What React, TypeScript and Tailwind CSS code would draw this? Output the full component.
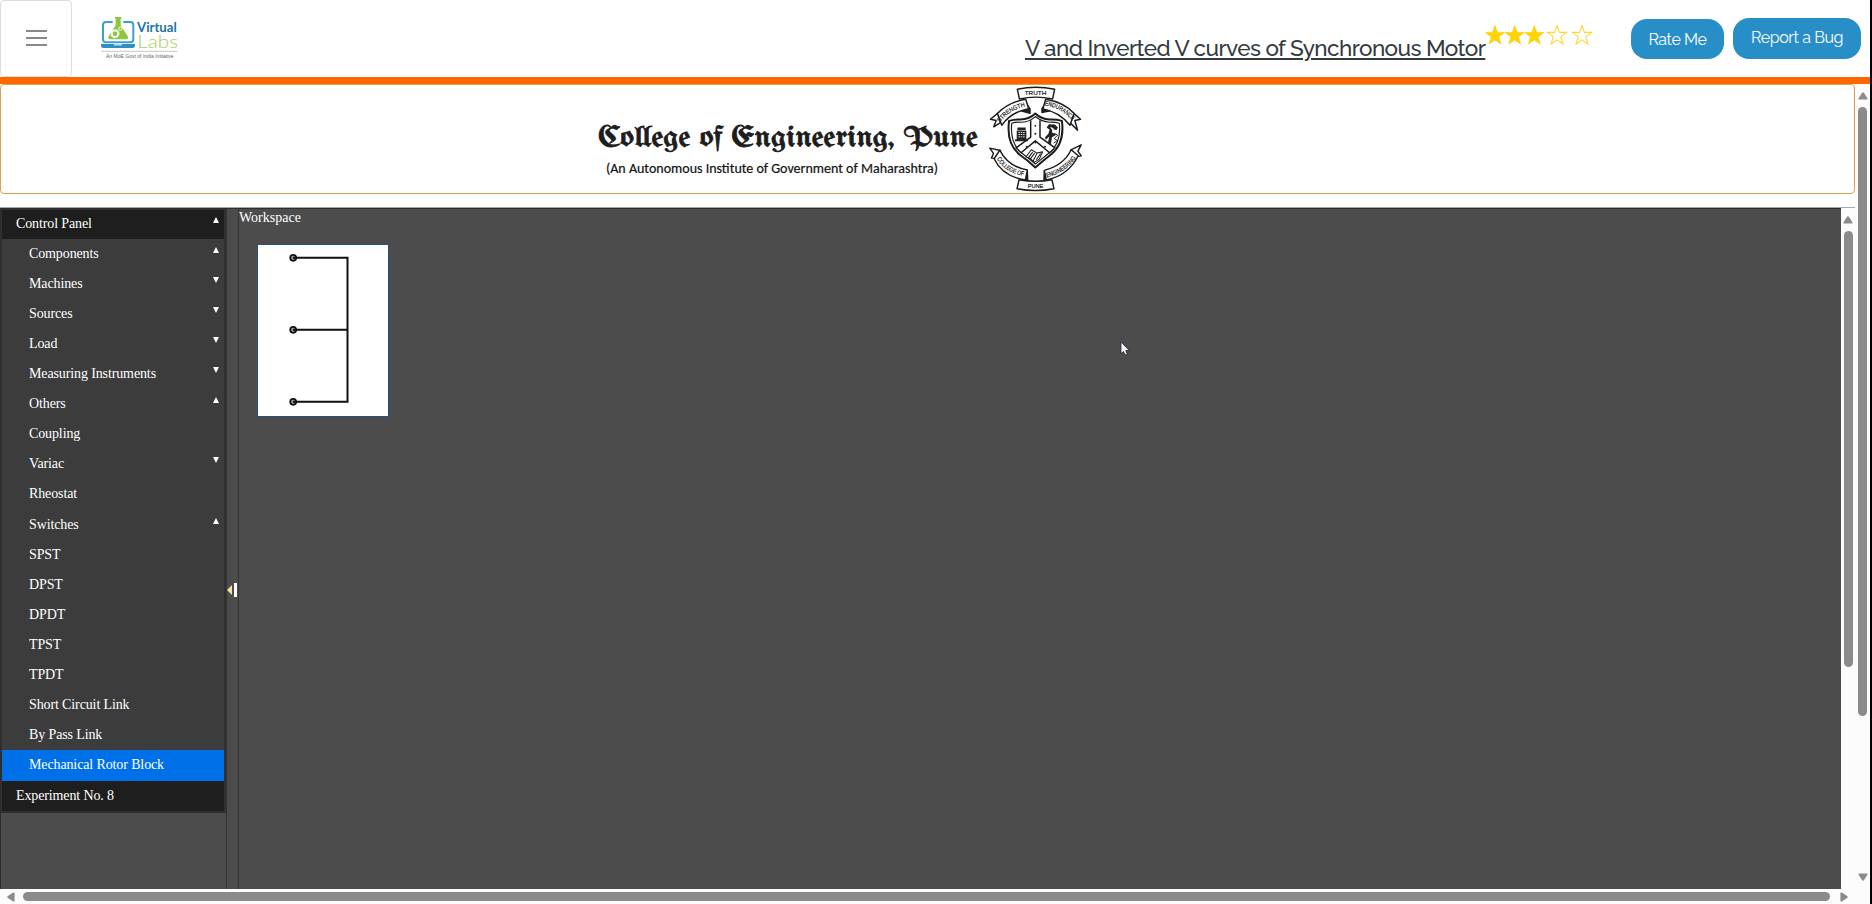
import React from "react";

type Arrow = "up" | "down" | undefined;
type Item = { label: string; arrow?: Arrow; selected?: boolean; tall?: boolean };

const ITEMS: Item[] = [
  { label: "Components", arrow: "up" },
  { label: "Machines", arrow: "down" },
  { label: "Sources", arrow: "down" },
  { label: "Load", arrow: "down" },
  { label: "Measuring Instruments", arrow: "down" },
  { label: "Others", arrow: "up" },
  { label: "Coupling" },
  { label: "Variac", arrow: "down" },
  { label: "Rheostat", tall: true },
  { label: "Switches", arrow: "up" },
  { label: "SPST" },
  { label: "DPST" },
  { label: "DPDT" },
  { label: "TPST" },
  { label: "TPDT" },
  { label: "Short Circuit Link" },
  { label: "By Pass Link" },
  { label: "Mechanical Rotor Block", selected: true, tall: true },
];

function Triangle({ dir }: { dir: "up" | "down" | "left" | "right" }) {
  const rot = { up: "", right: "rotate-90", down: "rotate-180", left: "-rotate-90" }[dir];
  return (
    <svg viewBox="0 0 10 8" className={`h-[8px] w-[10px] shrink-0 ${rot}`}>
      <path d="M5 0.2C5.5 0.2 5.8 0.5 6.1 0.9L9.4 6.2C9.9 7 9.5 7.6 8.7 7.6H1.3C0.5 7.6 0.1 7 0.6 6.2L3.9 0.9C4.2 0.5 4.5 0.2 5 0.2Z" fill="#8b8b8b" />
    </svg>
  );
}

function MenuArrow({ dir, header }: { dir: Arrow; header?: boolean }) {
  if (!dir) return null;
  return (
    <svg viewBox="0 0 6 6" className={`h-[6px] w-[6px] ${header ? "mt-[7px]" : "mt-[8px]"} ${dir === "down" ? "rotate-180" : ""}`}>
      <path d="M3 0L6 6H0Z" fill="#fff" />
    </svg>
  );
}

function VirtualLabsLogo() {
  return (
    <svg viewBox="300 36 252 144" className="ml-[28px] h-[48px] w-[84px] shrink-0">
      <path d="M338 66H318Q309 66 309 76V117Q309 127 318 127H391Q400 127 400 117V76Q400 66 391 66H370" fill="none" stroke="#3d9fd0" strokeWidth="6" />
      <path d="M303 132H405V137Q405 144 398 144H310Q303 144 303 137Z" fill="#2f8fc4" />
      <path d="M342 133H366V136H342Z" fill="#fff" />
      <path d="M345 51H364V56H362V76L383 109Q387 118 377 118H332Q322 118 326 109L347 76V56H345Z" fill="#8cc63f" />
      <circle cx="345" cy="101" r="11" fill="none" stroke="#fff" strokeWidth="5" strokeDasharray="6 2.6" />
      <circle cx="345" cy="101" r="9" fill="none" stroke="#fff" strokeWidth="4" />
      <circle cx="361" cy="86" r="5" fill="none" stroke="#fff" strokeWidth="3" />
      <text x="411" y="97" textLength="119" lengthAdjust="spacingAndGlyphs" fontFamily="Lato, sans-serif" fontWeight="700" fontSize="42" fill="#2273a8">Virtual</text>
      <text x="412" y="144" textLength="122" lengthAdjust="spacingAndGlyphs" fontFamily="Lato, sans-serif" fontWeight="300" fontSize="50" fill="#9fd05a">Labs</text>
      <path d="M303 154H532" stroke="#a8a8a8" strokeWidth="2" />
      <text x="318" y="173" textLength="203" lengthAdjust="spacingAndGlyphs" fontFamily="Liberation Sans, sans-serif" fontSize="15" fill="#666">An MoE Govt of India Initiative</text>
    </svg>
  );
}

const STAR = "M10 0.4L12.4 7.4H19.6L13.8 11.9L15.9 19L10 14.9L4.1 19L6.2 11.9L0.4 7.4H7.6Z";

function Stars() {
  return (
    <svg viewBox="0 0 108 20" className="mt-[25px] h-[20px] w-[108px] shrink-0">
      {[0, 19.7, 39.3].map((x) => (
        <path key={x} d={STAR} transform={`translate(${x} 0)`} fill="#ffd500" stroke="#fbc800" strokeWidth="0.6" />
      ))}
      {[62, 87].map((x) => (
        <path key={x} d={STAR} transform={`translate(${x} 0)`} fill="#fff" stroke="#fdd835" strokeWidth="1.1" />
      ))}
    </svg>
  );
}

function Emblem() {
  return (
    <svg viewBox="85 15 285 325" className="h-[108px] w-[95px] shrink-0" fill="#fff" stroke="#1c1c1c" strokeWidth="4.4" strokeLinejoin="round">
      <defs>
        <path id="arcStrength" d="M120 128Q150 89 200 79" />
        <path id="arcEndurance" d="M255 76Q310 84 342 128" />
        <path id="arcCollege" d="M111 237Q138 281 196 289" />
        <path id="arcEngineering" d="M261 293Q316 281 354 230" />
      </defs>
      {/* ribbons */}
      <path d="M193 62L211 86V100L178 91Z M263 62L247 86V98L278 91Z" fill="#222" />
      <path d="M116 98L92 118L109 122L102 141L122 128Z" />
      <path d="M340 98L363 118L346 122L354 151L332 129Z" />
      <path d="M113 101Q145 67 198 58L207 86Q155 96 126 136Z" />
      <path d="M258 58Q313 67 344 101L331 136Q300 96 250 87Z" />
      <path d="M173 28Q228 16 285 28L279 57Q228 46 179 57Z" />
      <path d="M122 212L90 205L101 221L95 235L116 236Z" />
      <path d="M334 210L365 195L355 214L365 228L345 232Z" />
      <path d="M183 299L203 276L204 300Z M272 299L254 274L253 300Z" fill="#222" />
      <path d="M120 211Q144 260 203 271L197 301Q128 290 103 237Z" />
      <path d="M335 210Q312 257 254 272L260 301Q326 288 356 228Z" />
      <path d="M178 300Q228 309 277 300L283 327Q228 338 172 327Z" />
      {/* shield */}
      <path d="M227 101Q208 119 182 119Q165 118 148 123Q139 191 179 224Q205 242 227 263Q251 242 274 224Q316 191 307 123Q290 118 270 119Q244 118 227 101Z" strokeWidth="6" />
      <path d="M227 110Q208 127 182 127Q168 126 156 130Q150 188 184 218Q207 235 227 253Q249 235 270 218Q306 188 299 130Q286 126 270 127Q246 126 227 110Z" strokeWidth="3.5" />
      <path d="M213 121V172L169 204L184 219L227 183L270 219L286 204L241 172V121" strokeWidth="4.5" />
      <g fill="#222" stroke="none">
        <path d="M173 143H198V151H173Z M171 153H200V180H171Z M166 178H205V184H166Z" />
        <path d="M176 158H196M176 164H196M176 171H196" stroke="#fff" strokeWidth="2.5" strokeDasharray="5 2" />
        <path d="M261 143L268 133L286 134L295 143L290 151L279 147L277 157L290 165L277 172L274 193L265 188L269 170L258 180L256 173L266 162L270 150Z" />
        <path d="M271 141L282 145L278 151Z" fill="#fff" />
        <path d="M284 160L294 166L284 176L293 182L282 190" fill="none" stroke="#222" strokeWidth="3" />
        <circle cx="227" cy="138" r="3" />
        <circle cx="227" cy="162" r="3" />
        <circle cx="227" cy="188" r="3" />
        <circle cx="201" cy="201" r="3" />
        <circle cx="256" cy="201" r="3" />
      </g>
      <path d="M199 231L215 210L232 220L249 216L239 238L224 248L214 238Z M232 220L221 243M219 217L207 233M225 220L213 236M243 221L230 240" strokeWidth="3.2" />
      <g fill="#111" stroke="#111" strokeWidth="0.5" fontFamily="Liberation Sans, sans-serif" fontSize="19">
        <text x="195" y="45" textLength="65" lengthAdjust="spacingAndGlyphs" fontSize="17">TRUTH</text>
        <text><textPath href="#arcStrength" textLength="92" lengthAdjust="spacingAndGlyphs">STRENGTH</textPath></text>
        <text><textPath href="#arcEndurance" textLength="97" lengthAdjust="spacingAndGlyphs">ENDURANCE</textPath></text>
        <text><textPath href="#arcCollege" textLength="99" lengthAdjust="spacingAndGlyphs">COLLEGE OF</textPath></text>
        <text><textPath href="#arcEngineering" textLength="108" lengthAdjust="spacingAndGlyphs">ENGINEERING</textPath></text>
        <text x="204" y="325" textLength="47" lengthAdjust="spacingAndGlyphs" fontSize="17">PUNE</text>
      </g>
    </svg>
  );
}

function CollegeTitle() {
  return (
    <svg viewBox="0 0 386 64" className="mt-[30px] h-[64px] w-[386px] shrink-0">
      <text x="2" y="31" textLength="380" lengthAdjust="spacingAndGlyphs" fontFamily="'Old English Text MT', UnifrakturMaguntia, UnifrakturCook, Liberation Serif, serif" fontSize="29" fill="#1d1d1d" stroke="#1d1d1d" strokeWidth="0.8">
        College of Engineering, Pune
      </text>
      <text x="10" y="58" textLength="332" lengthAdjust="spacingAndGlyphs" fontFamily="Calibri, Carlito, Lato, sans-serif" fontSize="14" fill="#111" stroke="#111" strokeWidth="0.2">
        (An Autonomous Institute of Government of Maharashtra)
      </text>
    </svg>
  );
}

function StarConnection() {
  return (
    <svg viewBox="0 0 130 171" className="h-[171px] w-[130px]" fill="none" stroke="#111">
      <path d="M35 12.8H89.5V156.8H35M35 84.8H89.5" strokeWidth="2" />
      {[12.8, 84.8, 156.8].map((y) => (
        <circle key={y} cx="35.2" cy={y} r="3" strokeWidth="1.7" fill="#999" />
      ))}
      {[12.8, 84.8, 156.8].map((y) => (
        <path key={y} d={`M35 ${y}h4`} strokeWidth="2" />
      ))}
    </svg>
  );
}

export default function App() {
  return (
    <div className="relative flex h-[904px] w-[1872px] overflow-hidden bg-white font-['Liberation_Serif',serif]">
      <div className="flex w-[1870px] flex-col">
        <header className="flex h-[77px] shrink-0 bg-white">
          <button className="flex h-[77px] w-[72px] shrink-0 flex-col items-center justify-center gap-[5px] rounded border border-[#dedede] pb-[1px] pl-[1px]">
            <span className="h-[2px] w-[21px] bg-[#888]" />
            <span className="h-[2px] w-[21px] bg-[#888]" />
            <span className="h-[2px] w-[21px] bg-[#888]" />
          </button>
          <div className="flex items-start pt-[12px]">
            <VirtualLabsLogo />
          </div>
          <div className="ml-auto flex font-[Raleway,Lato,sans-serif]">
            <h1 className="mt-[32px] h-[32px] w-[460px] whitespace-nowrap text-[22.5px] font-medium leading-[33px] tracking-[-0.57px] text-[#333a40] underline decoration-2 underline-offset-[2px]">
              V and Inverted V curves of Synchronous Motor
            </h1>
            <Stars />
            <button className="ml-[38px] mt-[19px] h-[40px] w-[93px] rounded-[16px] bg-[#288ec8] pt-[2px] text-[16px] tracking-[-0.4px] text-white">Rate Me</button>
            <button className="ml-[9px] mr-[9px] mt-[18px] h-[41px] w-[128px] rounded-[16px] bg-[#288ec8] pb-[2px] text-[16px] tracking-[-0.4px] text-white">Report a Bug</button>
          </div>
        </header>
        <div className="h-[7px] shrink-0 bg-[#ff6600]" />
        <div className="flex min-h-0 flex-1">
          <main className="flex w-[1855px] flex-col">
            <section className="flex h-[110px] shrink-0 rounded-[4px] border border-[#daa54a] pl-[595px]">
              <CollegeTitle />
              <div className="ml-[6px]">
                <Emblem />
              </div>
            </section>
            <div className="mt-[13px] h-px shrink-0 bg-[#aaa]" />
            <div className="flex h-[681px] shrink-0">
              <div className="flex w-[1841px] border-t border-l border-[#2d2d2d] bg-[#4c4c4c]">
                <aside className="w-[226px] shrink-0 border-r border-[#333]">
                  <nav className="border-b-2 border-l border-r-2 border-t border-[#303030] bg-[#3c3c3c] text-[14px] tracking-[-0.12px] text-white">
                    <div className="flex h-[29px] justify-between bg-[#1e1e1e] pl-[14px] pr-[5px] leading-[28px]">
                      <span>Control Panel</span>
                      <MenuArrow dir="up" header />
                    </div>
                    {ITEMS.map((it) => (
                      <div
                        key={it.label}
                        className={`flex justify-between pl-[27px] pr-[5px] leading-[30px] ${it.tall ? "h-[31px]" : "h-[30px]"} ${it.selected ? "bg-[#0070e8]" : ""}`}
                      >
                        <span>{it.label}</span>
                        <MenuArrow dir={it.arrow} />
                      </div>
                    ))}
                    <div className="h-[30px] bg-[#1e1e1e] pl-[14px] leading-[29px]">Experiment No. 8</div>
                  </nav>
                </aside>
                <div className="flex w-[12px] shrink-0 items-center border-r border-[#363636] pt-[82px]">
                  <svg viewBox="0 0 10 16" className="h-[16px] w-[10px]">
                    <path d="M0 8L5 3V13Z" fill="#f3dfa0" />
                    <path d="M7 1H10V15H7Z" fill="#fff" />
                  </svg>
                </div>
                <section className="flex-1 text-[14px] leading-[17px] text-white">
                  <div className="h-[18px]">Workspace</div>
                  <div className="ml-[18px] mt-[17px] h-[173px] w-[132px] border border-[#24527e] bg-white">
                    <StarConnection />
                  </div>
                </section>
              </div>
              <div className="flex w-[14px] flex-col items-center bg-[#fcfcfc] pt-[8px]">
                <Triangle dir="up" />
                <div className="mt-[7px] h-[436px] w-[9px] shrink-0 rounded-full bg-[#8b8b8b]" />
              </div>
            </div>
            <div className="flex flex-1 items-center bg-[#fcfcfc] pl-[6px]">
              <Triangle dir="left" />
              <div className="ml-[7px] mr-[9px] h-[9px] w-[1807px] rounded-full bg-[#8b8b8b]" />
              <Triangle dir="right" />
            </div>
          </main>
          <div className="flex w-[15px] flex-col items-center bg-[#fcfcfc] pb-[23px] pt-[8px]">
            <Triangle dir="up" />
            <div className="mb-auto mt-[7px] h-[609px] w-[9px] shrink-0 rounded-full bg-[#8b8b8b]" />
            <Triangle dir="down" />
          </div>
        </div>
      </div>
      <div className="w-[2px] bg-black" />
      <svg viewBox="0 0 12 18" className="absolute left-[1120px] top-[341px] h-[18px] w-[12px]">
        <path d="M1 1V12.5L3.5 10.5L5.2 14L7.2 13L5.7 9.5H9.2Z" fill="#fff" stroke="#23233a" strokeWidth="0.8" />
      </svg>
    </div>
  );
}
